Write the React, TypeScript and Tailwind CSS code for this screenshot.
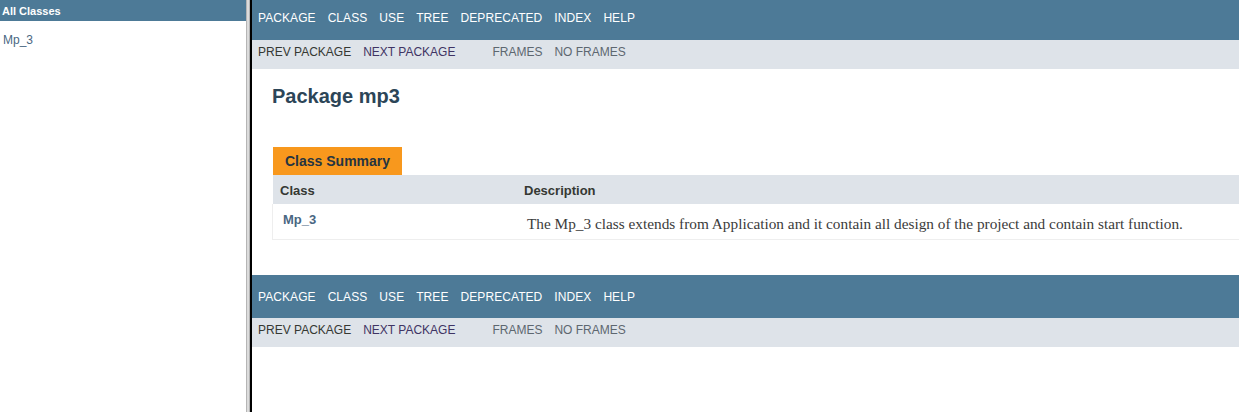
const navItems = ['Package', 'Class', 'Use', 'Tree', 'Deprecated', 'Index', 'Help'];

function TopNav({ bottom = false }: { bottom?: boolean }) {
  return (
    <div>
      <div className={bottom ? 'h-[43px] bg-[#4D7A97] pt-[15px]' : 'h-[40px] bg-[#4D7A97] pt-[11px]'}>
        <ul className="flex text-[12px] leading-[14px] tracking-[0.07px] text-white uppercase">
          {navItems.map((item) => (
            <li key={item} className="px-[6px]">
              {item}
            </li>
          ))}
        </ul>
      </div>
      <div className="flex h-[29px] bg-[#dee3e9] pt-[5px] text-[12px] leading-[14px] uppercase">
        <ul className="flex">
          <li className="px-[6px] text-[#353833]">Prev Package</li>
          <li className="px-[6px] text-[#3f3464]">Next Package</li>
        </ul>
        <ul className="ml-[25px] flex text-[#5d6770]">
          <li className="px-[6px]">Frames</li>
          <li className="px-[6px]">No Frames</li>
        </ul>
      </div>
    </div>
  );
}

export default function App() {
  return (
    <div className="flex h-[412px] w-[1239px] overflow-hidden bg-white font-['Liberation_Sans',Arial,sans-serif]">
      <aside className="w-[246px] shrink-0">
        <h1 className="h-[21px] bg-[#4D7A97] px-[2px] text-[11px] leading-[22px] font-bold text-white">All Classes</h1>
        <ul className="pt-[12px] pl-[3px] text-[12px] leading-[14px] text-[#4A6782]">
          <li>Mp_3</li>
        </ul>
      </aside>

      <div className="w-[4px] shrink-0 border-x border-[#b5b5b5] bg-[#dcdcdc]" />
      <div className="w-[2px] shrink-0 bg-black" />

      <main className="min-w-0 flex-1 overflow-hidden">
        <TopNav />

        <h2 className="mt-[15px] pl-[20px] text-[20px] leading-[24px] font-bold text-[#2c4557]">Package mp3</h2>

        <section className="mt-[39px] ml-[20px] w-[1000px]">
          <div className="ml-[1px] inline-block h-[28px] bg-[#F8981D] px-[12px] text-[14px] leading-[28px] font-bold text-[#253441]">
            Class Summary
          </div>
          <div className="ml-[1px] flex h-[29px] bg-[#dee3e9] pt-[1px] text-[13px] leading-[29px] font-bold text-[#353833]">
            <div className="w-[244px] pl-[7px]">Class</div>
            <div className="pl-[7px]">Description</div>
          </div>
          <div className="flex h-[36px] border-b border-l border-[#eeeeee]">
            <div className="w-[244px] pt-[8px] pl-[10px] text-[13px] leading-[16px] font-bold text-[#4A6782]">Mp_3</div>
            <div className="pt-[10px] pl-[10px] font-['Liberation_Serif',Georgia,serif] text-[15.3px] leading-[20px] text-[#3b3b3b]">
              The Mp_3 class extends from Application and it contain all design of the project and contain start function.
            </div>
          </div>
        </section>

        <div className="mt-[35px]">
          <TopNav bottom />
        </div>
      </main>
    </div>
  );
}
